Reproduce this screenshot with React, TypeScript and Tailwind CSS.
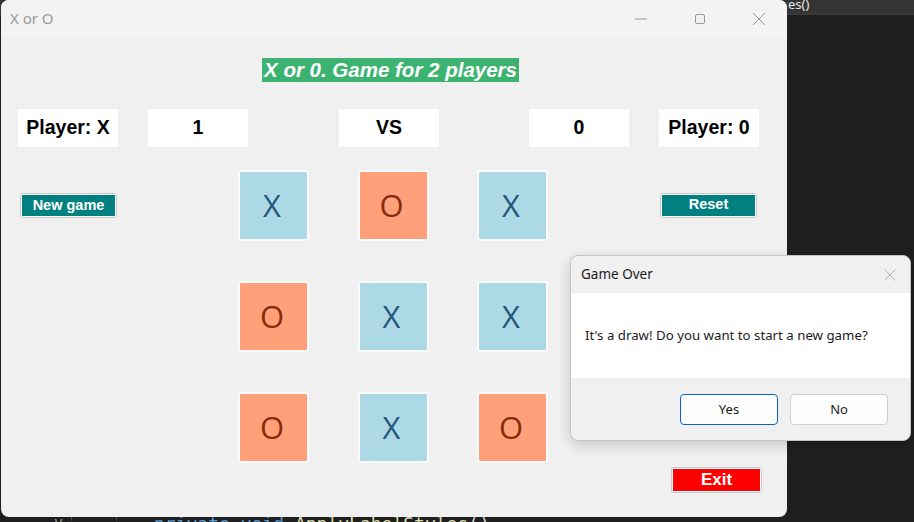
const arial = "font-['Liberation_Sans',Arial,sans-serif]"

type Mark = 'X' | 'O'

const board: Mark[][] = [
  ['X', 'O', 'X'],
  ['O', 'X', 'X'],
  ['O', 'X', 'O'],
]

function Cell({ mark }: { mark: Mark }) {
  const isX = mark === 'X'
  return (
    <div
      className={`box-border flex h-[71px] w-[71px] items-center justify-center rounded-[3px] border-2 border-[#fbfbfb] pr-[3px] font-['Open_Sans','Noto_Sans',sans-serif] text-[31px] ${
        isX ? 'bg-[#add8e6] text-[#22597a]' : 'bg-[#ffa07a] text-[#862a0c]'
      }`}
    >
      {mark}
    </div>
  )
}

function InfoLabel({ text }: { text: string }) {
  return (
    <div
      className={`flex h-[38px] w-[100px] items-center justify-center bg-white text-[19.5px] font-bold text-black ${arial}`}
    >
      {text}
    </div>
  )
}

function WinButton({ label, className }: { label: string; className: string }) {
  return (
    <div className="rounded-[3px] border border-[#c9c9c9] bg-white p-px">
      <div className={`flex items-center justify-center font-bold text-white ${arial} ${className}`}>
        {label}
      </div>
    </div>
  )
}

function TitleControls() {
  return (
    <div className="flex items-center gap-[46px] pr-[21px] text-[#9a9a9a]">
      <svg width="14" height="14" viewBox="0 0 14 14">
        <path d="M1 7h12" stroke="currentColor" strokeWidth="1" />
      </svg>
      <svg width="12" height="12" viewBox="0 0 12 12">
        <rect x="1.5" y="1.5" width="9" height="9" rx="1.5" fill="none" stroke="currentColor" />
      </svg>
      <svg width="14" height="14" viewBox="0 0 14 14">
        <path d="M1 1l12 12M13 1L1 13" stroke="currentColor" strokeWidth="1" />
      </svg>
    </div>
  )
}

function GameWindow() {
  return (
    <div className="absolute left-[1px] top-0 flex h-[517px] w-[786px] flex-col overflow-hidden rounded-[8px] bg-[#f0f0f0]">
      <div className="flex h-[37px] items-center justify-between bg-[#f3f3f3]">
        <span className="pl-[9px] font-['Noto_Sans',sans-serif] text-[15px] text-[#999]">X or O</span>
        <TitleControls />
      </div>

      <div className="pt-[21px]">
        <div
          className={`ml-[261px] flex h-[24px] w-[257px] items-center justify-center bg-[#3cb371] text-[20.5px] font-bold italic text-white ${arial}`}
        >
          X or 0. Game for 2 players
        </div>
      </div>

      <div className="mt-[27px] flex pl-[17px]">
        <InfoLabel text="Player: X" />
        <div className="ml-[30px]">
          <InfoLabel text="1" />
        </div>
        <div className="ml-[91px]">
          <InfoLabel text="VS" />
        </div>
        <div className="ml-[90px]">
          <InfoLabel text="0" />
        </div>
        <div className="ml-[30px]">
          <InfoLabel text="Player: 0" />
        </div>
      </div>

      <div className="flex items-start">
        <div className="w-[237px] pl-[19px] pt-[46px]">
          <div className="w-[97px]">
            <WinButton label="New game" className="h-[21px] bg-[#008080] text-[14.5px]" />
          </div>
        </div>

        <div className="grid grid-cols-[71px_71px_71px] content-start gap-x-[48.5px] gap-y-[40px] pt-[23px]">
          {board.flat().map((m, i) => (
            <Cell key={i} mark={m} />
          ))}
        </div>

        <div className="flex flex-col pl-[112px] pt-[46px]">
          <div className="w-[97px]">
            <WinButton label="Reset" className="h-[21px] bg-[#008080] pb-[2px] text-[14.5px]" />
          </div>
          <div className="ml-[11px] mt-[249px] w-[91px]">
            <WinButton label="Exit" className="h-[22px] bg-[#ff0000] text-[17px]" />
          </div>
        </div>
      </div>
    </div>
  )
}

function GameOverDialog() {
  return (
    <div className="absolute left-[570px] top-[255px] flex h-[186px] w-[341px] flex-col overflow-hidden rounded-[8px] border border-[#c4c4c4] bg-[#f0f0f0] font-['Noto_Sans',sans-serif] shadow-[0_4px_14px_rgba(0,0,0,0.18)]">
      <div className="flex h-[37px] items-center justify-between bg-[#f1f0f1] pl-[10px] pr-[14px]">
        <span className="text-[13.5px] text-[#1b1b1b]">Game Over</span>
        <svg width="12" height="12" viewBox="0 0 12 12" className="text-[#b3b3b3]">
          <path d="M0.5 0.5l11 11M11.5 0.5l-11 11" stroke="currentColor" strokeWidth="1" />
        </svg>
      </div>
      <div className="flex h-[85px] items-center bg-white pl-[14px] text-[13.25px] text-[#1b1b1b]">
        It's a draw! Do you want to start a new game?
      </div>
      <div className="flex flex-1 items-start justify-end gap-[12px] pr-[22px] pt-[16px] text-[13px] text-[#1b1b1b]">
        <button className="h-[31px] w-[98px] rounded-[4px] border border-[#0067c0] bg-[#fdfdfd]">Yes</button>
        <button className="h-[31px] w-[98px] rounded-[4px] border border-[#d0d0d0] bg-[#fdfdfd]">No</button>
      </div>
    </div>
  )
}

export default function App() {
  return (
    <div className="relative flex h-[522px] w-[914px] flex-col overflow-hidden bg-[#1f1f1f]">
      {/* editor behind the window */}
      <div className="flex h-[15px] border-b-2 border-[#3b3b3b] bg-[#343434]">
        <span className="ml-[788px] mt-[-4px] font-['Noto_Sans',sans-serif] text-[13px] leading-[16px] text-[#e6e6e6]">
          es()
        </span>
      </div>
      <div className="flex flex-1 items-end">
        <div className="mb-[-12px] flex h-[22px] items-center font-['DejaVu_Sans_Mono',monospace] text-[18px]">
          <span className="ml-[54px] w-[16px] text-[15px] text-[#9a9a9a]">v</span>
          <span className="ml-[1px] h-[22px] border-l border-dashed border-[#555]" />
          <span className="ml-[44px] h-[22px] border-l border-dashed border-[#555]" />
          <span className="ml-[37px] whitespace-pre">
            <span className="text-[#569cd6]">private void </span>
            <span className="text-[#dcdcaa]">ApplyLabelStyles</span>
            <span className="text-[#d4d4d4]">()</span>
          </span>
        </div>
      </div>

      <GameWindow />
      <GameOverDialog />
    </div>
  )
}
